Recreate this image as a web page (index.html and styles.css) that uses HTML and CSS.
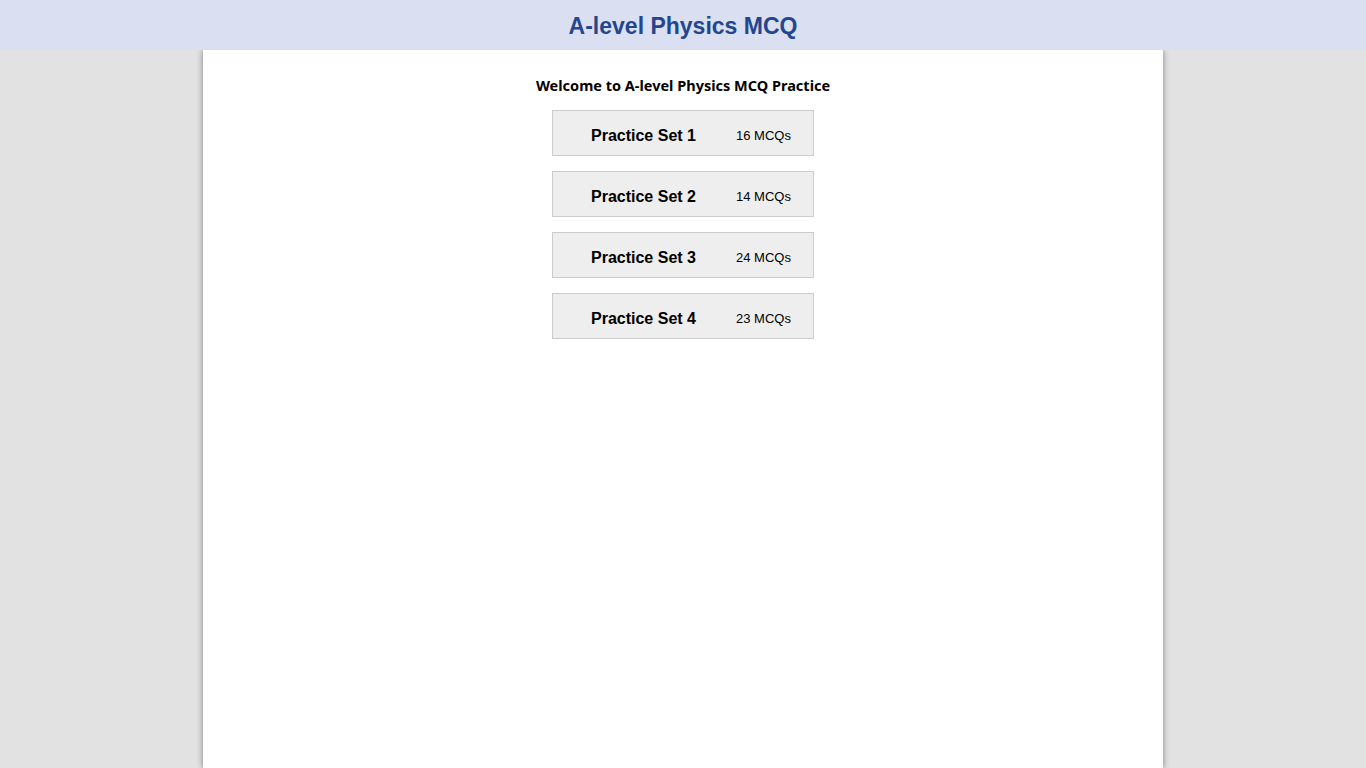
FILE: index.html
```html
<!DOCTYPE html>
<html lang="en">
<head>
<meta charset="utf-8">
<title>A-level Physics MCQ</title>
<link rel="stylesheet" href="styles.css">
</head>
<body>
<header class="topbar">
  <h1 class="site-title">A-level Physics MCQ</h1>
</header>
<main class="page">
  <h2 class="welcome">Welcome to A-level Physics MCQ Practice</h2>
  <div class="set-list">
    <button class="set-btn"><span class="set-name">Practice Set 1</span><span class="set-count">16 MCQs</span></button>
    <button class="set-btn"><span class="set-name">Practice Set 2</span><span class="set-count">14 MCQs</span></button>
    <button class="set-btn"><span class="set-name">Practice Set 3</span><span class="set-count">24 MCQs</span></button>
    <button class="set-btn"><span class="set-name">Practice Set 4</span><span class="set-count">23 MCQs</span></button>
  </div>
</main>
</body>
</html>
```
FILE: styles.css
```css
html, body {
  margin: 0;
  padding: 0;
  height: 100%;
}
body {
  background: #e2e2e2;
  font-family: "Liberation Sans", Arial, sans-serif;
  display: flex;
  flex-direction: column;
  overflow: hidden;
}
.topbar {
  height: 50px;
  background: #dae0f2;
  display: flex;
  align-items: center;
  justify-content: center;
  position: relative;
  z-index: 2;
  flex-shrink: 0;
}
.site-title {
  margin: 0;
  padding-top: 2px;
  font-size: 23px;
  font-weight: bold;
  color: #23468c;
  line-height: 1;
}
.page {
  width: 960px;
  margin: 0 auto;
  flex: 1;
  background: #fff;
  box-shadow: 0 0 6px rgba(0, 0, 0, 0.45);
  display: flex;
  flex-direction: column;
  align-items: center;
  padding-top: 25px;
  box-sizing: border-box;
}
.welcome {
  margin: 0 0 15px;
  font-family: "Noto Sans", "Open Sans", sans-serif;
  font-size: 14.5px;
  font-weight: bold;
  color: #000;
  line-height: 20px;
}
.set-list {
  display: flex;
  flex-direction: column;
  gap: 15px;
}
.set-btn {
  width: 262px;
  height: 46px;
  box-sizing: border-box;
  background: #eeeeee;
  border: 1px solid #cccccc;
  display: flex;
  align-items: center;
  padding: 0 0 0 38px;
  font-family: "Liberation Sans", Arial, sans-serif;
  color: #000;
  cursor: pointer;
}
.set-name {
  font-size: 16px;
  font-weight: bold;
  width: 145px;
  text-align: left;
  padding-top: 5px;
}
.set-count {
  font-size: 13px;
  padding-top: 5px;
}
```
